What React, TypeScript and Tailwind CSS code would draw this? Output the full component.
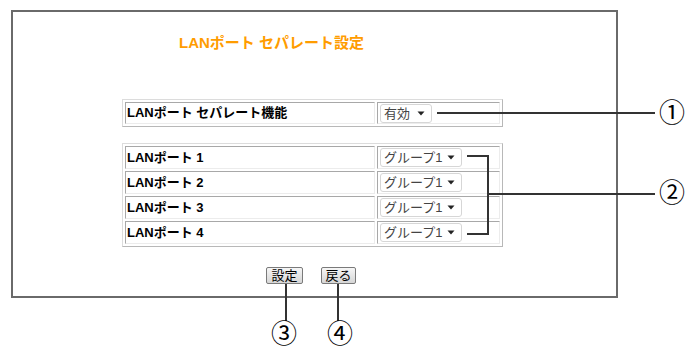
import type { ReactNode } from 'react';

const FONT = 'font-["Liberation_Sans","Noto_Sans_CJK_JP",sans-serif]';

function Caret() {
  return (
    <svg width="8" height="5" viewBox="0 0 8 5" className="shrink-0">
      <path d="M0.5 0.5 L7.5 0.5 L4 4.5 Z" fill="#222" />
    </svg>
  );
}

function SelectBox({ label, width }: { label: string; width: string }) {
  return (
    <div
      className={`${width} h-[19px] flex items-center justify-between pl-[3px] pr-[6px] border border-[#d6d6d6] rounded-[3px] bg-white text-[13px] text-[#444] leading-none`}
    >
      <span>{label}</span>
      <Caret />
    </div>
  );
}

function Row({ label, children, h }: { label: string; children: ReactNode; h: string }) {
  return (
    <div className={`flex gap-[2px] ${h}`}>
      <div className="w-[250px] flex items-center pl-[1px] border-t border-l border-[#a8a8a8] border-r border-b border-r-[#ececec] border-b-[#ececec] font-bold text-[13px] text-black">
        {label}
      </div>
      <div className="flex-1 flex items-center pl-[2px] border-t border-l border-[#a8a8a8] border-r border-b border-r-[#ececec] border-b-[#ececec]">
        {children}
      </div>
    </div>
  );
}

function Table({ children }: { children: ReactNode }) {
  return (
    <div className="ml-[109px] w-[381px] flex flex-col gap-[2px] p-[2px] border border-[#dcdcdc] border-r-[#b8b8b8] border-b-[#b8b8b8] bg-white">
      {children}
    </div>
  );
}

function Btn({ label, width }: { label: string; width: string }) {
  return (
    <div
      className={`${width} h-[17px] flex items-center justify-center border border-[#7a7a7a] rounded-[2px] bg-gradient-to-b from-[#f6f6f6] to-[#d6d6d6] text-[13px] text-black leading-none`}
    >
      {label}
    </div>
  );
}

export default function App() {
  const ports = ['LANポート 1', 'LANポート 2', 'LANポート 3', 'LANポート 4'];

  return (
    <div className={`relative w-[688px] h-[349px] bg-white overflow-hidden ${FONT}`}>
      <div className="pt-[10px] pl-[11px]">
        <div className="w-[607px] h-[288px] border-2 border-[#6a6a6a] flex flex-col">
          <div className="mt-[21px] ml-[166px] h-[20px] leading-[20px] text-[15px] font-bold text-[#ff9c00]">
            LANポート セパレート設定
          </div>

          <div className="mt-[46px]">
            <Table>
              <Row label="LANポート セパレート機能" h="h-[22px]">
                <SelectBox label="有効" width="w-[52px]" />
              </Row>
            </Table>
          </div>

          <div className="mt-[16px]">
            <Table>
              {ports.map((p) => (
                <Row key={p} label={p} h="h-[23px]">
                  <SelectBox label="グループ1" width="w-[82px]" />
                </Row>
              ))}
            </Table>
          </div>

          <div className="mt-[20px] ml-[253px] flex gap-[18px]">
            <Btn label="設定" width="w-[37px]" />
            <Btn label="戻る" width="w-[35px]" />
          </div>
        </div>
      </div>

      {/* callout lines */}
      <div className="absolute left-[437px] top-[112px] w-[218px] h-[2px] bg-[#333]" />
      <div className="absolute left-[467px] top-[155px] w-[22px] h-[2px] bg-[#333]" />
      <div className="absolute left-[467px] top-[233px] w-[22px] h-[2px] bg-[#333]" />
      <div className="absolute left-[487px] top-[155px] w-[2px] h-[80px] bg-[#333]" />
      <div className="absolute left-[487px] top-[193px] w-[168px] h-[2px] bg-[#333]" />
      <div className="absolute left-[285px] top-[284px] w-[2px] h-[37px] bg-[#333]" />
      <div className="absolute left-[337px] top-[284px] w-[2px] h-[37px] bg-[#333]" />

      {/* numbered markers */}
      <div className="absolute left-[658px] top-[99px] w-[28px] h-[28px] flex items-center justify-center text-[26px] leading-none text-black">①</div>
      <div className="absolute left-[658px] top-[179px] w-[28px] h-[28px] flex items-center justify-center text-[26px] leading-none text-black">②</div>
      <div className="absolute left-[270px] top-[320px] w-[28px] h-[28px] flex items-center justify-center text-[26px] leading-none text-black">③</div>
      <div className="absolute left-[326px] top-[320px] w-[28px] h-[28px] flex items-center justify-center text-[26px] leading-none text-black">④</div>
    </div>
  );
}
